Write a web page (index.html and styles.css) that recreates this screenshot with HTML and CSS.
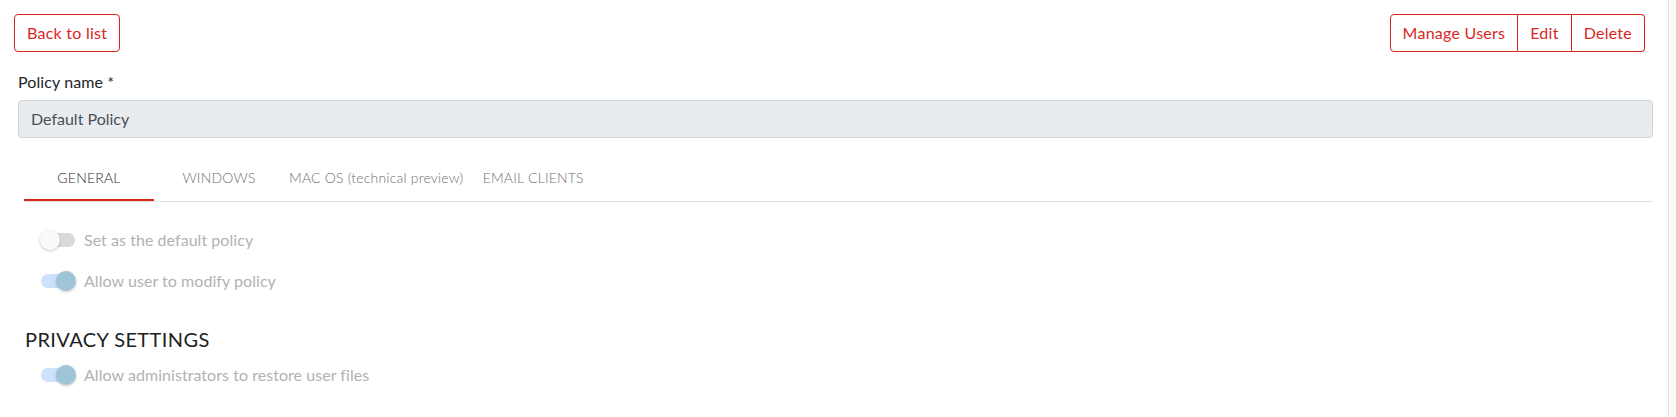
FILE: index.html
```html
<!DOCTYPE html>
<html lang="en">
<head>
<meta charset="utf-8">
<title>Default Policy</title>
<link rel="stylesheet" href="styles.css">
</head>
<body>
<div class="page">
  <main class="main">
    <div class="toolbar">
      <button class="btn">Back to list</button>
      <div class="btn-group">
        <button class="btn grp">Manage Users</button>
        <button class="btn grp">Edit</button>
        <button class="btn grp">Delete</button>
      </div>
    </div>

    <label class="field-label">Policy name *</label>
    <div class="input">Default Policy</div>

    <div class="tabs">
      <div class="tab active">GENERAL</div>
      <div class="tab">WINDOWS</div>
      <div class="tab">MAC OS (technical preview)</div>
      <div class="tab">EMAIL CLIENTS</div>
    </div>

    <div class="options">
      <div class="opt">
        <span class="switch"><span class="track"></span><span class="thumb"></span></span>
        <span class="opt-label">Set as the default policy</span>
      </div>
      <div class="opt">
        <span class="switch on"><span class="track"></span><span class="thumb"></span></span>
        <span class="opt-label">Allow user to modify policy</span>
      </div>
    </div>

    <h2 class="section-title">PRIVACY SETTINGS</h2>
    <div class="options tight">
      <div class="opt">
        <span class="switch on"><span class="track"></span><span class="thumb"></span></span>
        <span class="opt-label">Allow administrators to restore user files</span>
      </div>
    </div>
  </main>
  <div class="scrollbar"></div>
</div>
</body>
</html>
```

FILE: styles.css
```css
* { box-sizing: border-box; }
html, body { margin: 0; padding: 0; background: #fff; }
body {
  font-family: Lato, "Open Sans", Arial, sans-serif;
  font-size: 16px;
  color: #212529;
  height: 417px;
  overflow: hidden;
}
.page { display: flex; height: 417px; }
.main { flex: 1; padding: 14px 15px 0 18px; }
.scrollbar {
  width: 8px;
  border-left: 1px solid #e3e3e3;
  background: #fafafa;
}

.toolbar {
  display: flex;
  justify-content: space-between;
  margin: 0 8px 0 -4px;
}
.btn {
  font-family: inherit;
  font-size: 16px;
  letter-spacing: 0.25px;
  color: #d9271e;
  background: #fff;
  border: 1px solid #d9271e;
  border-radius: 4px;
  height: 38px;
  padding: 0 12px;
  line-height: 36px;
  cursor: pointer;
}
.btn-group { display: flex; }
.btn.grp { border-radius: 0; }
.btn.grp + .btn.grp { border-left: 0; }
.btn.grp:first-child { border-radius: 4px 0 0 4px; }
.btn.grp:last-child { border-radius: 0 4px 4px 0; }

.field-label {
  display: block;
  margin-top: 18px;
  line-height: 24px;
  margin-bottom: 6px;
  letter-spacing: 0.1px;
}
.input {
  height: 38px;
  border: 1px solid #ced4da;
  border-radius: 4px;
  background: #e9ecef;
  color: #495057;
  padding: 0 12px;
  line-height: 36px;
}

.tabs {
  display: flex;
  margin: 15px 0 0 6px;
  border-bottom: 1px solid #e0e0e0;
}
.tab {
  font-size: 14px;
  font-weight: 300;
  letter-spacing: 0.2px;
  color: #6f6f6f;
  min-width: 130px;
  height: 48px;
  padding: 0 5px;
  display: flex;
  align-items: center;
  justify-content: center;
  white-space: nowrap;
}
.tab.active {
  color: #1f1f1f;
  box-shadow: inset 0 -2px 0 #d9271e;
}

.options { padding: 17px 0 0 22px; }
.options.tight { padding-top: 0; }
.opt {
  display: flex;
  align-items: center;
  height: 41px;
}
.switch {
  position: relative;
  width: 36px;
  height: 20px;
  flex: none;
}
.track {
  position: absolute;
  left: 1px;
  right: 1px;
  top: 3px;
  height: 14px;
  border-radius: 7px;
  background: #d9d9d9;
}
.thumb {
  position: absolute;
  left: 0;
  top: 0;
  width: 20px;
  height: 20px;
  border-radius: 50%;
  background: #fafafa;
  box-shadow: 0 1px 3px rgba(0,0,0,0.22);
}
.switch.on .track { background: #cde2fa; }
.switch.on .thumb { left: auto; right: 0; background: #9fc4d8; }
.opt-label {
  margin-left: 8px;
  color: #b2b2b2;
  letter-spacing: 0.05px;
}

.section-title {
  font-size: 20px;
  font-weight: 400;
  letter-spacing: 0.4px;
  color: #222;
  line-height: 24px;
  margin: 26px 0 3px 7px;
}
```
